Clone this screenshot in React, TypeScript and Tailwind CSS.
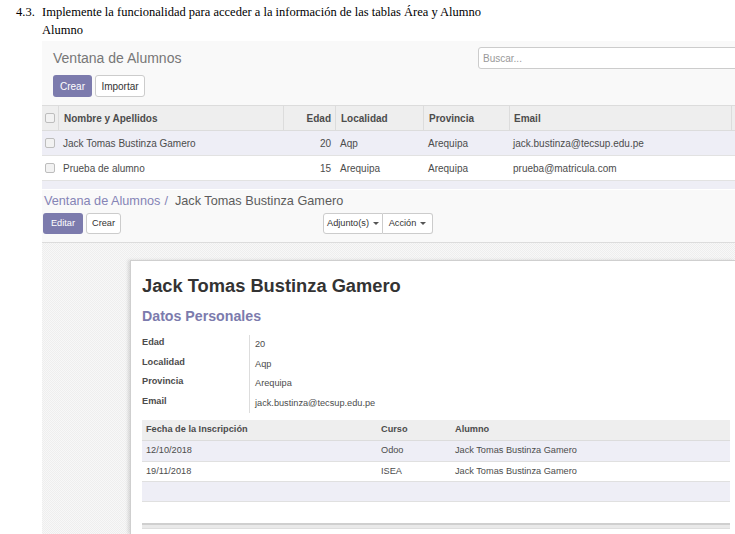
import React from "react";

const Check = () => (
  <span className="block w-[10px] h-[10px] rounded-[2px] border border-[#bdbdbd] bg-[#f2f2f2]" />
);

const Caret = () => (
  <span className="inline-block w-0 h-0 ml-[4px] border-x-[3px] border-x-transparent border-t-[3px] border-t-[#555] align-middle" />
);

const listRows = [
  { name: "Jack Tomas Bustinza Gamero", edad: "20", loc: "Aqp", prov: "Arequipa", email: "jack.bustinza@tecsup.edu.pe", bg: "bg-[#eeeef6]" },
  { name: "Prueba de alumno", edad: "15", loc: "Arequipa", prov: "Arequipa", email: "prueba@matricula.com", bg: "bg-white" },
];

export default function App() {
  return (
    <div className="w-[735px] h-[534px] overflow-hidden bg-white font-['Liberation_Sans',Arial,sans-serif] text-[#4c4c4c]">
      {/* Document text */}
      <div className="font-['Liberation_Serif','Times_New_Roman',serif] text-[12.5px] leading-[18px] text-black pt-[3px] mb-[2px]">
        <div className="flex">
          <span className="w-[42px] pl-[16px] shrink-0">4.3.</span>
          <span className="whitespace-nowrap">Implemente la funcionalidad para acceder a la información de las tablas Área y Alumno</span>
        </div>
        <div className="pl-[42px]">Alumno</div>
      </div>

      {/* List view screenshot */}
      <div className="ml-[42px] w-[693px] h-[148px] bg-[#f9f9f9] overflow-hidden">
        <div className="pt-[6px] pb-[8px]">
          <div className="flex h-[22px] items-center">
            <div className="w-[436px] shrink-0 pl-[11px] text-[14px] text-[#777] leading-none -mt-[1px]">Ventana de Alumnos</div>
            <div className="w-[262px] shrink-0 h-[22px] bg-white border border-[#ccc] rounded-l-[3px] flex items-center pl-[4px] text-[10px] text-[#999]">Buscar...</div>
          </div>
          <div className="flex mt-[6px] pl-[11px] gap-[3px]">
            <div className="w-[39px] h-[22px] rounded-[3px] bg-[#7c7bad] text-white text-[10px] flex items-center justify-center">Crear</div>
            <div className="w-[50px] h-[22px] rounded-[3px] bg-white border border-[#ccc] text-[#333] text-[10px] flex items-center justify-center">Importar</div>
          </div>
        </div>
        <div className="text-[10px]">
          <div className="grid grid-cols-[16px_225px_52px_88px_86px_222px_1fr] h-[26px] border-t border-b border-[#dcdcdc] bg-[#eeeeee] font-bold text-[#4c4c4c]">
            <div className="flex items-center pl-[3px]"><Check /></div>
            <div className="flex items-center pl-[5px] border-l border-[#dcdcdc]">Nombre y Apellidos</div>
            <div className="flex items-center justify-end pr-[4px] border-l border-[#dcdcdc]">Edad</div>
            <div className="flex items-center pl-[5px] border-l border-[#dcdcdc]">Localidad</div>
            <div className="flex items-center pl-[5px] border-l border-[#dcdcdc]">Provincia</div>
            <div className="flex items-center pl-[4px] border-l border-[#dcdcdc]">Email</div>
            <div className="border-l border-[#dcdcdc]" />
          </div>
          {listRows.map((r) => (
            <div key={r.name} className={`grid grid-cols-[16px_225px_52px_88px_86px_222px_1fr] h-[25px] border-b border-[#e2e2e2] ${r.bg}`}>
              <div className="flex items-center pl-[3px]"><Check /></div>
              <div className="flex items-center pl-[5px]">{r.name}</div>
              <div className="flex items-center justify-end pr-[4px]">{r.edad}</div>
              <div className="flex items-center pl-[5px]">{r.loc}</div>
              <div className="flex items-center pl-[5px]">{r.prov}</div>
              <div className="flex items-center pl-[4px]">{r.email}</div>
              <div />
            </div>
          ))}
          <div className="h-[25px] bg-[#eeeef6]" />
        </div>
      </div>

      {/* Form view screenshot */}
      <div className="ml-[42px] mt-[1px] w-[693px] h-[344px] overflow-hidden flex flex-col">
        <div className="bg-[#f9f9f9] pb-[8px] border-b border-[#dcdcdc]">
          <div className="h-[20px] flex items-center pl-[2px] pt-[3px] text-[12.7px] whitespace-nowrap">
            <span className="text-[#8584b6]">Ventana de Alumnos</span>
            <span className="text-[#8584b6] ml-[4px]">/</span>
            <span className="text-[#5c5c5c] ml-[7px]">Jack Tomas Bustinza Gamero</span>
          </div>
          <div className="flex mt-[3px] pl-[1px] text-[9.2px]">
            <div className="flex gap-[3px]">
              <div className="w-[40px] h-[21px] rounded-[3px] bg-[#7c7bad] text-white flex items-center justify-center">Editar</div>
              <div className="w-[35px] h-[21px] rounded-[3px] bg-white border border-[#ccc] text-[#333] flex items-center justify-center">Crear</div>
            </div>
            <div className="flex ml-[202px]">
              <div className="w-[60px] h-[21px] rounded-l-[3px] bg-white border border-[#ccc] text-[#333] flex items-center justify-center">Adjunto(s)<Caret /></div>
              <div className="w-[50px] h-[21px] rounded-r-[3px] bg-white border border-l-0 border-[#ccc] text-[#333] flex items-center justify-center">Acción<Caret /></div>
            </div>
          </div>
        </div>
        <div className="flex-1 flex pl-[88px] pt-[17px] bg-[repeating-conic-gradient(#eeeeee_0_25%,#f8f8f8_0_50%)] bg-[length:2px_2px]">
          <div className="flex-1 bg-white border-t border-l border-[#cfcfcf] shadow-[-2px_0_3px_rgba(0,0,0,0.12)] pl-[11px] pt-[14px]">
            <div className="text-[18.3px] font-bold leading-[22px] text-[#333] whitespace-nowrap">Jack Tomas Bustinza Gamero</div>
            <div className="mt-[11px] text-[14.2px] font-bold leading-[17px] text-[#7c7bad]">Datos Personales</div>
            <div className="mt-[10px] text-[9.2px] w-[300px]">
              {[
                ["Edad", "20"],
                ["Localidad", "Aqp"],
                ["Provincia", "Arequipa"],
                ["Email", "jack.bustinza@tecsup.edu.pe"],
              ].map(([l, v]) => (
                <div key={l} className="flex h-[19.5px]">
                  <div className="w-[107px] font-bold pt-[2px] leading-[11px]">{l}</div>
                  <div className="border-l border-[#ddd] pl-[5px] pt-[4px] leading-[11px]">{v}</div>
                </div>
              ))}
            </div>
            <div className="mt-[7px] w-[588px] text-[9.2px]">
              <div className="grid grid-cols-[235px_74px_1fr] h-[21px] bg-[#eeeeee] border-b border-[#dcdcdc] font-bold">
                <div className="flex items-center pl-[4px]">Fecha de la Inscripción</div>
                <div className="flex items-center pl-[4px]">Curso</div>
                <div className="flex items-center pl-[4px]">Alumno</div>
              </div>
              <div className="grid grid-cols-[235px_74px_1fr] h-[21px] bg-[#eeeef6] border-b border-[#e0e0e0]">
                <div className="flex items-center pl-[4px]">12/10/2018</div>
                <div className="flex items-center pl-[4px]">Odoo</div>
                <div className="flex items-center pl-[4px]">Jack Tomas Bustinza Gamero</div>
              </div>
              <div className="grid grid-cols-[235px_74px_1fr] h-[20px] bg-white border-b border-[#e0e0e0]">
                <div className="flex items-center pl-[4px]">19/11/2018</div>
                <div className="flex items-center pl-[4px]">ISEA</div>
                <div className="flex items-center pl-[4px]">Jack Tomas Bustinza Gamero</div>
              </div>
              <div className="h-[20px] bg-[#eeeef6] border-b border-[#e0e0e0]" />
              <div className="h-[21px] bg-white" />
              <div className="h-[6px] border-t-2 border-[#cfcfcf] bg-[#e9e9e9] border-b border-b-[#dedede]" />
            </div>
          </div>
        </div>
      </div>
    </div>
  );
}
